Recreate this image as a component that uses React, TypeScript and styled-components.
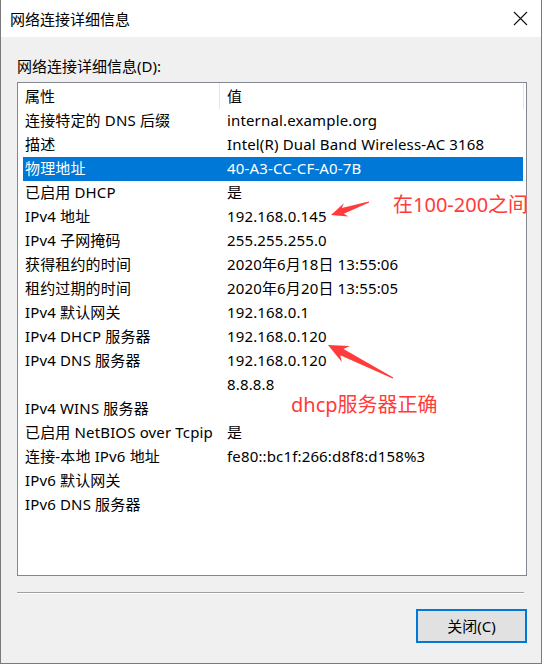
import styled, { createGlobalStyle } from "styled-components";

const GlobalStyle = createGlobalStyle`
  html, body {
    margin: 0;
    padding: 0;
    background: #ffffff;
  }
  body {
    font-family: "Noto Sans", "Noto Sans CJK SC", sans-serif;
    font-size: 15px;
    color: #000;
  }
`;

const Window = styled.div`
  position: relative;
  width: 542px;
  height: 664px;
  box-sizing: border-box;
  border: 1px solid #7a7a7a;
  border-top: none;
  background: #f0f0f0;
  display: flex;
  flex-direction: column;
  overflow: hidden;
`;

const TitleBar = styled.div`
  height: 37px;
  background: #ffffff;
  display: flex;
  align-items: center;
  justify-content: space-between;
  padding: 0 13px 0 9px;
  flex-shrink: 0;
`;

const Title = styled.span`
  font-size: 15px;
  line-height: 20px;
  margin-top: 1px;
`;

const Body = styled.div`
  flex: 1;
  display: flex;
  flex-direction: column;
  padding: 19px 15px 0 16px;
`;

const Label = styled.div`
  height: 26px;
  line-height: 20px;
`;

const ListBox = styled.div`
  width: 510px;
  height: 494px;
  box-sizing: border-box;
  border: 1px solid #828790;
  background: #ffffff;
  display: flex;
  flex-direction: column;
`;

const HeaderRow = styled.div`
  height: 26px;
  display: flex;
  flex-shrink: 0;
`;

const HeaderCell = styled.div<{ $w: number }>`
  width: ${p => p.$w}px;
  box-sizing: border-box;
  padding: 0 0 1px 7px;
  border-right: 1px solid #e5e5e5;
  display: flex;
  align-items: center;
`;

const Row = styled.div<{ $selected?: boolean }>`
  height: 24px;
  box-sizing: border-box;
  padding-bottom: 3px;
  margin-left: 5px;
  width: 500px;
  display: flex;
  align-items: center;
  background: ${p => (p.$selected ? "#0078d7" : "transparent")};
  color: ${p => (p.$selected ? "#ffffff" : "#000000")};
`;

const Cell = styled.div<{ $w: number; $pad: number }>`
  width: ${p => p.$w}px;
  padding-left: ${p => p.$pad}px;
  box-sizing: border-box;
  white-space: nowrap;
  letter-spacing: 0.15px;
`;

const Separator = styled.div`
  height: 1px;
  width: 507px;
  background: #a0a0a0;
  border-bottom: 1px solid #ffffff;
  margin-top: 16px;
`;

const Footer = styled.div`
  display: flex;
  justify-content: flex-end;
  padding-top: 15px;
  margin-right: -1px;
`;

const Button = styled.button`
  width: 111px;
  height: 34px;
  box-sizing: border-box;
  border: 2px solid #0078d7;
  background: #e1e1e1;
  font-family: "Noto Sans", "Noto Sans CJK SC", sans-serif;
  font-size: 15px;
  color: #000;
  padding: 0 0 2px;
`;

const Note = styled.div<{ $x: number; $y: number }>`
  position: absolute;
  left: ${p => p.$x}px;
  top: ${p => p.$y}px;
  color: #ff3b3b;
  font-size: 20px;
  line-height: 26px;
  font-family: "Noto Sans", "Noto Sans CJK SC", sans-serif;
  white-space: nowrap;
`;

const Overlay = styled.svg`
  position: absolute;
  left: 0;
  top: 0;
  pointer-events: none;
`;

type Pt = [number, number];

function arrowPoints(tip: Pt, tail: Pt, head: number, half: number, neck: number): string {
  const dx = tail[0] - tip[0];
  const dy = tail[1] - tip[1];
  const len = Math.hypot(dx, dy);
  const ux = dx / len;
  const uy = dy / len;
  const nx = -uy;
  const ny = ux;
  const at = (a: number, b: number): string =>
    `${(tip[0] + ux * a + nx * b).toFixed(1)},${(tip[1] + uy * a + ny * b).toFixed(1)}`;
  return [
    at(0, 0),
    at(head, half),
    at(head * 0.78, neck),
    at(len, 0.6),
    at(len, -0.6),
    at(head * 0.78, -neck),
    at(head, -half),
  ].join(" ");
}

const rows: { k: string; v: string; sel?: boolean }[] = [
  { k: "连接特定的 DNS 后缀", v: "internal.example.org" },
  { k: "描述", v: "Intel(R) Dual Band Wireless-AC 3168" },
  { k: "物理地址", v: "40-A3-CC-CF-A0-7B", sel: true },
  { k: "已启用 DHCP", v: "是" },
  { k: "IPv4 地址", v: "192.168.0.145" },
  { k: "IPv4 子网掩码", v: "255.255.255.0" },
  { k: "获得租约的时间", v: "2020年6月18日 13:55:06" },
  { k: "租约过期的时间", v: "2020年6月20日 13:55:05" },
  { k: "IPv4 默认网关", v: "192.168.0.1" },
  { k: "IPv4 DHCP 服务器", v: "192.168.0.120" },
  { k: "IPv4 DNS 服务器", v: "192.168.0.120" },
  { k: "", v: "8.8.8.8" },
  { k: "IPv4 WINS 服务器", v: "" },
  { k: "已启用 NetBIOS over Tcpip", v: "是" },
  { k: "连接-本地 IPv6 地址", v: "fe80::bc1f:266:d8f8:d158%3" },
  { k: "IPv6 默认网关", v: "" },
  { k: "IPv6 DNS 服务器", v: "" },
];

export default function App() {
  return (
    <Window>
      <GlobalStyle />
      <TitleBar>
        <Title>网络连接详细信息</Title>
        <svg width="15" height="15" viewBox="0 0 15 15">
          <path d="M1 1 L14 14 M14 1 L1 14" stroke="#111" strokeWidth="1.1" fill="none" />
        </svg>
      </TitleBar>
      <Body>
        <Label>网络连接详细信息(D):</Label>
        <ListBox>
          <HeaderRow>
            <HeaderCell $w={202}>属性</HeaderCell>
            <HeaderCell $w={304}>值</HeaderCell>
          </HeaderRow>
          {rows.map((r, i) => (
            <Row key={i} $selected={r.sel}>
              <Cell $w={197} $pad={2}>{r.k}</Cell>
              <Cell $w={303} $pad={7}>{r.v}</Cell>
            </Row>
          ))}
        </ListBox>
        <Separator />
        <Footer>
          <Button>关闭(C)</Button>
        </Footer>
      </Body>

      <Overlay width="542" height="664">
        <polygon points={arrowPoints([330, 215], [368, 202], 16, 7, 3)} fill="#ff3b3b" />
        <polygon points={arrowPoints([327, 345], [392, 378], 20, 9, 3.5)} fill="#ff3b3b" />
      </Overlay>
      <Note $x={392} $y={192}>在100-200之间</Note>
      <Note $x={290} $y={392}>dhcp服务器正确</Note>
    </Window>
  );
}
